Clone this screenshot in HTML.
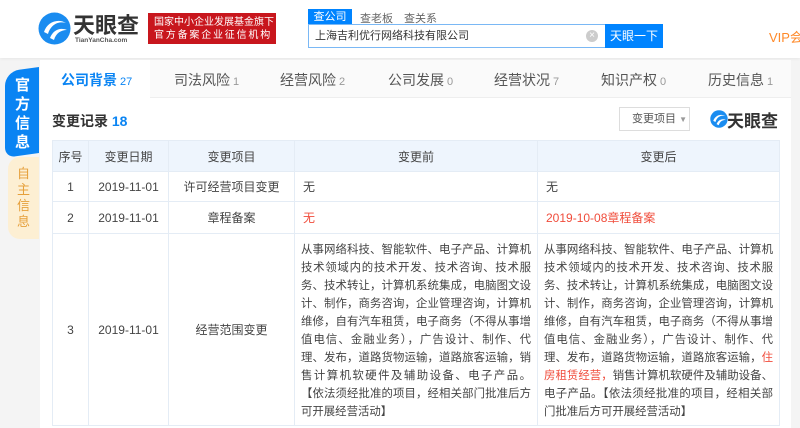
<!DOCTYPE html>
<html><head><meta charset="utf-8"><style>
*{margin:0;padding:0;box-sizing:border-box}
body{width:800px;height:428px;overflow:hidden;background:#f4f4f4;font-family:"Liberation Sans","Noto Sans CJK SC",sans-serif;color:#333;position:relative}
.a{position:absolute}
.hdr{left:0;top:0;width:800px;height:58px;background:#fff;box-shadow:0 1px 3px rgba(0,0,0,.06)}
.nav{left:40px;top:60px;width:751px;height:38px;background:#fafafa;border-bottom:1px solid #eee}
.nav span{position:absolute;top:10px;font-size:14px;color:#555;white-space:nowrap}
.nav span i{font-style:normal;font-size:11px;color:#999;margin-left:3px}
.panel{left:40px;top:98px;width:751px;height:330px;background:#fff}
table{position:absolute;left:52px;top:140px;width:727px;border-collapse:collapse;font-size:12px;table-layout:fixed}
td{border:1px solid #e4ecf5;text-align:center;color:#444;overflow:hidden}
tr.h td{background:#eef5fd;height:31px}
.t{text-align:left;padding:0 6px;vertical-align:top;font-size:11.4px}
.ln{display:block;text-align:justify;text-align-last:justify;height:18px;line-height:18px;white-space:nowrap;overflow:hidden}
.ln.l{text-align-last:left}
.red{color:#f04c3b}
</style></head><body>
<div class="a hdr"></div>
<svg class="a" style="left:38px;top:12px" width="33" height="33" viewBox="0 0 33 33"><circle cx="16.5" cy="16.5" r="16" fill="#1a8cf0"/><path d="M6 20 C9 10 20 6 28 11 C21 9 13 12 10 22 Z" fill="#fff"/><path d="M12 26 C15 18 22 15 29 18 C23 18 18 21 16 28 Z" fill="#fff"/></svg>
<div class="a" style="left:73px;top:8px;font-size:22px;font-weight:bold;color:#333;letter-spacing:0">天眼查</div>
<div class="a" style="left:75px;top:37px;font-size:6.5px;color:#555;font-weight:bold">TianYanCha.com</div>
<div class="a" style="left:148px;top:13px;width:128px;height:31px;background:#c8161d;color:#fff;font-size:10px;line-height:13px;padding:3px 0 0 6px;white-space:nowrap;overflow:hidden">国家中小企业发展基金旗下<br><span style="letter-spacing:1.8px">官方备案企业征信机构</span></div>
<div class="a" style="left:308px;top:9px;width:44px;height:16px;background:#0084ff;color:#fff;font-size:11px;text-align:center;line-height:16px">查公司</div>
<div class="a" style="left:360px;top:10px;font-size:11px;color:#666">查老板</div>
<div class="a" style="left:404px;top:10px;font-size:11px;color:#666">查关系</div>
<div class="a" style="left:308px;top:24px;width:298px;height:24px;border:1px solid #7ab8f5;background:#fff;font-size:11px;line-height:22px;padding-left:6px;color:#333">上海吉利优行网络科技有限公司</div>
<div class="a" style="left:586px;top:30px;width:12px;height:12px;border-radius:50%;background:#ccc;color:#fff;font-size:10px;line-height:12px;text-align:center">×</div>
<div class="a" style="left:605px;top:24px;width:58px;height:24px;background:#0084ff;color:#fff;font-size:12px;line-height:24px;text-align:center">天眼一下</div>
<div class="a" style="left:769px;top:27px;font-size:13px;color:#ff8a2a;white-space:nowrap">VIP会员</div>

<div class="a" style="left:5px;top:67px;width:34px;height:86px;background:#0a84f3;border-radius:14px 0 0 10px;transform:skewY(-8deg);transform-origin:right top"></div>
<div class="a" style="left:15px;top:76px;width:16px;color:#fff;font-size:15px;line-height:19px;font-weight:bold">官<br>方<br>信<br>息</div>
<div class="a" style="left:8px;top:157px;width:31px;height:82px;background:#fdefd3;border-radius:12px 0 0 12px"></div>
<div class="a" style="left:17px;top:166px;width:13px;color:#e6a03c;font-size:13px;line-height:16px">自<br>主<br>信<br>息</div>

<div class="a nav">
<div class="a" style="left:0;top:0;width:110px;height:38px;background:#fff"></div>
<span style="left:21px;color:#0a84f3;font-weight:bold">公司背景<i style="color:#0a84f3;font-weight:normal">27</i></span>
<span style="left:134px">司法风险<i>1</i></span>
<span style="left:240px">经营风险<i>2</i></span>
<span style="left:348px">公司发展<i>0</i></span>
<span style="left:454px">经营状况<i>7</i></span>
<span style="left:561px">知识产权<i>0</i></span>
<span style="left:668px">历史信息<i>1</i></span>
</div>
<div class="a panel"></div>
<div class="a" style="left:52px;top:111px;font-size:14px;font-weight:bold;color:#333">变更记录 <span style="color:#0a84f3">18</span></div>
<div class="a" style="left:619px;top:107px;width:71px;height:24px;border:1px solid #ddd;font-size:11px;line-height:22px;padding-left:12px;color:#555;white-space:nowrap">变更项目 <span style="font-size:8px;color:#999">▼</span></div>
<svg class="a" style="left:710px;top:110px" width="18" height="18" viewBox="0 0 33 33"><circle cx="16.5" cy="16.5" r="16" fill="#1a8cf0"/><path d="M6 20 C9 10 20 6 28 11 C21 9 13 12 10 22 Z" fill="#fff"/><path d="M12 26 C15 18 22 15 29 18 C23 18 18 21 16 28 Z" fill="#fff"/></svg>
<div class="a" style="left:727px;top:107px;font-size:17px;font-weight:bold;color:#333">天眼查</div>

<table>
<colgroup><col style="width:36px"><col style="width:80px"><col style="width:126px"><col style="width:243px"><col style="width:242px"></colgroup>
<tr class="h"><td>序号</td><td>变更日期</td><td>变更项目</td><td>变更前</td><td>变更后</td></tr>
<tr style="height:30px"><td>1</td><td>2019-11-01</td><td>许可经营项目变更</td><td style="text-align:left;padding-left:8px">无</td><td style="text-align:left;padding-left:8px">无</td></tr>
<tr style="height:32px"><td>2</td><td>2019-11-01</td><td>章程备案</td><td class="red" style="text-align:left;padding-left:8px">无</td><td class="red" style="text-align:left;padding-left:8px">2019-10-08章程备案</td></tr>
<tr style="height:192px"><td>3</td><td>2019-11-01</td><td>经营范围变更</td>
<td class="t" style="padding-top:7px">
<span class="ln">从事网络科技、智能软件、电子产品、计算机</span>
<span class="ln">技术领域内的技术开发、技术咨询、技术服</span>
<span class="ln">务、技术转让，计算机系统集成，电脑图文设</span>
<span class="ln">计、制作，商务咨询，企业管理咨询，计算机</span>
<span class="ln">维修，自有汽车租赁，电子商务（不得从事增</span>
<span class="ln">值电信、金融业务），广告设计、制作、代</span>
<span class="ln">理、发布，道路货物运输，道路旅客运输，销</span>
<span class="ln">售计算机软硬件及辅助设备、电子产品。</span>
<span class="ln">【依法须经批准的项目，经相关部门批准后方</span>
<span class="ln l">可开展经营活动】</span>
</td>
<td class="t" style="padding-top:7px">
<span class="ln">从事网络科技、智能软件、电子产品、计算机</span>
<span class="ln">技术领域内的技术开发、技术咨询、技术服</span>
<span class="ln">务、技术转让，计算机系统集成，电脑图文设</span>
<span class="ln">计、制作，商务咨询，企业管理咨询，计算机</span>
<span class="ln">维修，自有汽车租赁，电子商务（不得从事增</span>
<span class="ln">值电信、金融业务），广告设计、制作、代</span>
<span class="ln">理、发布，道路货物运输，道路旅客运输，<span class="red">住</span></span>
<span class="ln"><span class="red">房租赁经营，</span>销售计算机软硬件及辅助设备、</span>
<span class="ln">电子产品。【依法须经批准的项目，经相关部</span>
<span class="ln l">门批准后方可开展经营活动】</span>
</td></tr>
</table>
</body></html>
